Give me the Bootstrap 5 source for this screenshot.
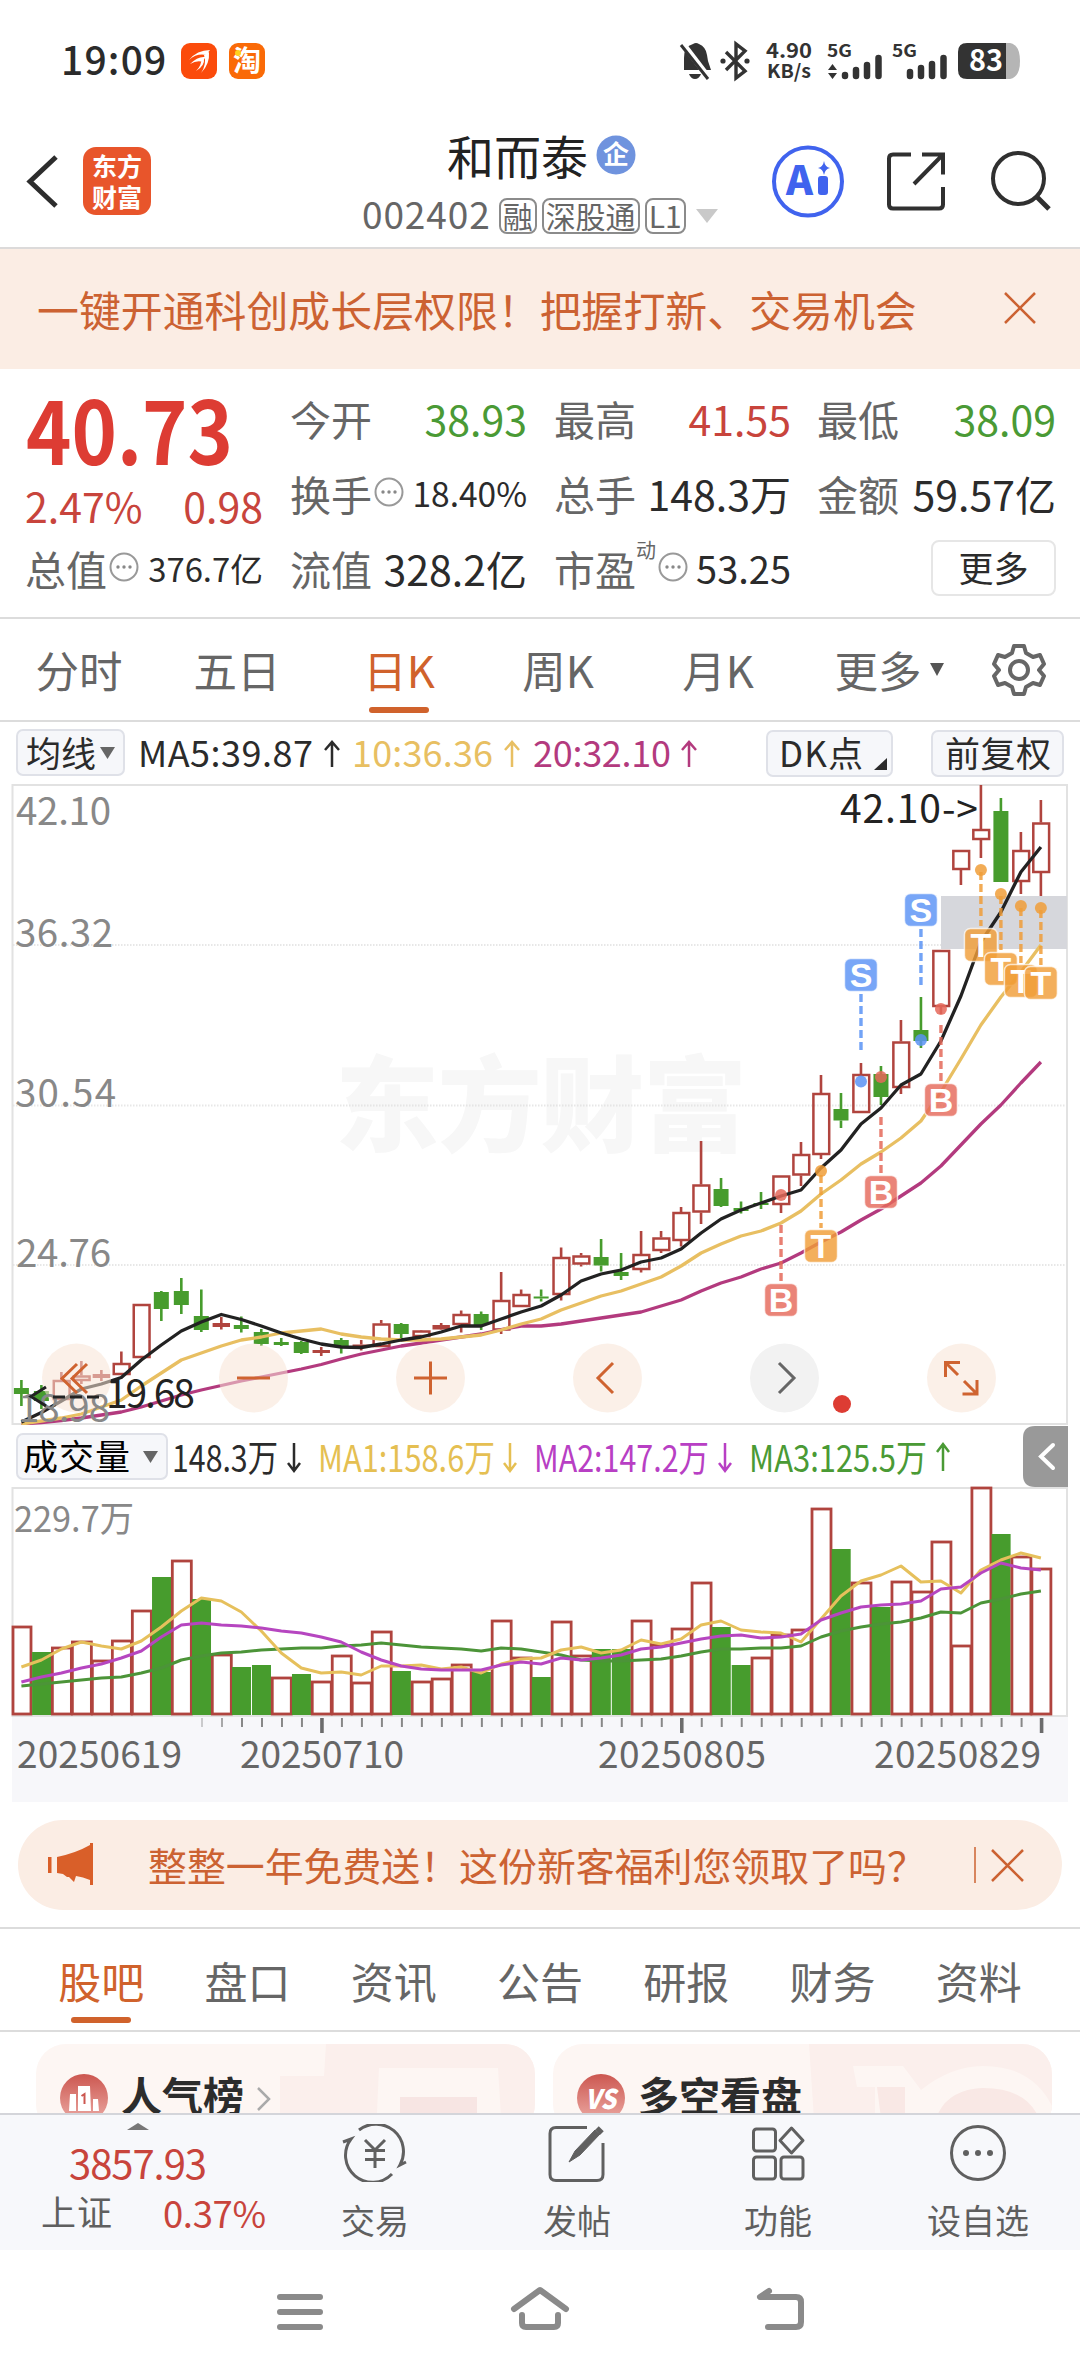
<!DOCTYPE html>
<html lang="zh-CN">
<head>
<meta charset="utf-8">
<meta name="viewport" content="width=device-width, initial-scale=1">
<title>和而泰 002402</title>
<link href="https://cdn.jsdelivr.net/npm/bootstrap@5.3.0/dist/css/bootstrap.min.css" rel="stylesheet">
<style>
body{width:1080px;height:2376px;overflow:hidden;background:#fff;color:#2b2b2b;font-family:"Noto Sans CJK SC",sans-serif;line-height:1;}
svg{display:block;flex:none}
svg text{font-family:"Noto Sans CJK SC",sans-serif}
.status-bar{height:110px;padding:12px 60px 0 61px}
.clock{font-size:39px;font-weight:500;letter-spacing:1.2px;width:120px;padding-bottom:6px}
.head-bar{height:139px;border-bottom:2px solid #dcdada}
.head-mid{width:362px;margin-left:207px}
.stock-name{font-size:47px;color:#222}
.stock-sub{font-size:37px;color:#666;height:37px;gap:5px;margin-top:19px}
.tagbox{font-size:30px;border:2px solid #8b8b8b;border-radius:8px;height:36px;line-height:31px;padding:0 2px;white-space:nowrap}
.notice{height:120px;background:#fbede4;color:#cc6232;font-size:41.9px;padding:0 43px 0 37px}
.notice span{padding-bottom:0}
.quote{height:250px;border-bottom:2px solid #dcdcdc;padding:14px 24px 0 25px}
.qcol{width:237px}
.qcell{height:75px;padding-bottom:5px;font-size:41px;white-space:nowrap}
.qcell .lab{color:#666}
.up{color:#c8443c}.down{color:#4a9a35}
.price{height:98px}
.pct{height:52px;font-size:41px;padding-bottom:3px}
.more-btn{width:125px;height:56px;border:2px solid #e6e6e6;border-radius:8px;font-size:35px;padding-bottom:3px}
.ktabs{height:103px;border-bottom:2px solid #dcdcdc;font-size:43.5px;color:#666}
.tabitem{height:100%;position:relative;white-space:nowrap}
.tabitem.on{color:#d0622c}
.tabitem.on::after{content:"";position:absolute;left:50%;margin-left:-30px;width:60px;height:6px;border-radius:3px;background:#d0622c;bottom:7px}
.promo{height:90px;margin:18px 18px 0;border-radius:45px;background:#fbede4;color:#cc6232;font-size:38.9px;padding:0 38px 0 30px}
.btabs{height:105px;margin-top:17px;border-top:2px solid #dcdcdc;border-bottom:2px solid #dcdcdc;font-size:43px;color:#666;padding:1px 28px 0}
.btabs .tabitem{width:146.3px}
.cards{height:81px;padding:12px 28px 0 36px;gap:18px;overflow:hidden}
.feed{width:499px;height:90px;border-radius:30px;background:#fdf6f3;position:relative;overflow:hidden;padding:30px 0 0 24px;gap:13px}
.feed .bgart{position:absolute;left:0;top:0}
.feed b{font-size:41px;font-weight:700;color:#2c2c2c;position:relative}
.feed .ic{position:relative}
.dock{height:137px;background:#f7f8fb;border-top:2px solid #d4d5da}
.dock .idx{width:274px}
.dock .act{color:#5f5f5f;font-size:34px;padding-top:9px;gap:21px}
.sysnav{height:125px}
</style>
</head>
<body>
<div class="status-bar d-flex align-items-center">
  <div class="clock">19:09</div>
  <svg width="84" height="36" viewBox="0 0 84 36">
    <rect width="36" height="36" rx="9" fill="#fb4b0b"/><path d="M8 17q8-10 21-10l-4 5q-9-2-17 5z M9 21q8-8 15-7l-2 5q-6-2-13 2z M20 30q6-9 3-18l5-3q1 12-8 21z M15 28q6-6 5-12l3-1q1 8-8 13z" fill="#fff"/>
    <rect x="48" width="36" height="36" rx="9" fill="#fa6a07"/><text x="52" y="28" font-size="28" font-weight="700" fill="#fff">淘</text><circle cx="57" cy="10" r="3" fill="#ffd21c"/>
  </svg>
  <svg class="ms-auto" width="342" height="44" viewBox="678 38 342 44" fill="#333">
    <path d="M684 69V57q0-12 9-14 3-2 6 0 7 3 8 11l1 6 3 9z"/><path d="M689 73h12q-2 5-6 5t-6-5z"/><path d="M683 43l26 34" stroke="#fff" stroke-width="6"/><path d="M681 44l27 34" stroke="#333" stroke-width="3"/>
    <path d="M726 51l19 19-9 7V43l9 7-19 19" fill="none" stroke="#333" stroke-width="3.4"/><circle cx="723" cy="60" r="2.6"/><circle cx="747" cy="60" r="2.6"/>
    <text x="766" y="57" font-size="20" font-weight="700" textLength="46" lengthAdjust="spacingAndGlyphs">4.90</text>
    <text x="767" y="77" font-size="19" font-weight="700" textLength="44" lengthAdjust="spacingAndGlyphs">KB/s</text>
    <text x="827" y="56" font-size="17" font-weight="700" textLength="25" lengthAdjust="spacingAndGlyphs">5G</text>
    <text x="892" y="56" font-size="17" font-weight="700" textLength="25" lengthAdjust="spacingAndGlyphs">5G</text>
    <path d="M828 69l4.500-6 4.500 6zM828 72l4.500 6 4.500-6z"/>
    <g stroke="#333" stroke-width="6.500" stroke-linecap="round"><path d="M845 75v-1M856 75v-6M867 75v-11M878.500 75v-18M910 75v-4M921 75v-8M932 75v-12M943.500 75v-18"/></g>
    <path d="M968 42h42q10 2 10 18t-10 18h-42z" fill="#b5b5b5"/><path d="M967 42h39v36h-39q-9 0-9-9V51q0-9 9-9z"/>
    <text x="969" y="70" font-size="29" font-weight="700" fill="#fff" textLength="34" lengthAdjust="spacingAndGlyphs">83</text>
  </svg>
</div>

<div class="head-bar d-flex">
  <svg width="155" height="130" viewBox="0 110 155 130">
    <path d="M56 157L30 181.500 56 206" fill="none" stroke="#2d2d2d" stroke-width="5"/>
    <rect x="83" y="147" width="68" height="68" rx="13" fill="#e8552b"/>
    <text x="92" y="176" font-size="25" font-weight="600" fill="#fff" textLength="50">东方</text><text x="92" y="207" font-size="25" font-weight="600" fill="#fff" textLength="50">财富</text>
  </svg>
  <div class="head-mid d-flex flex-column">
    <div class="d-flex align-items-center" style="padding:21px 0 0 85px">
      <span class="stock-name">和而泰</span>
      <svg class="ms-2" width="40" height="40"><circle cx="20" cy="20" r="19.500" fill="#6f93de"/><text x="7" y="29" font-size="26" font-weight="700" fill="#fff">企</text></svg>
    </div>
    <div class="stock-sub d-flex align-items-center"><span style="letter-spacing:.9px;padding-bottom:5px;margin-right:3px">002402</span><span class="tagbox">融</span><span class="tagbox">深股通</span><span class="tagbox">L1</span>
      <svg class="ms-1" width="24" height="16"><path d="M1 1h22L12 15z" fill="#c9c9c9"/></svg></div>
  </div>
  <svg class="ms-auto" width="314" height="130" viewBox="766 110 314 130">
    <circle cx="808" cy="181.500" r="34" fill="none" stroke="#4063ee" stroke-width="4"/>
    <text x="786" y="195" font-size="40" font-weight="900" fill="#4063ee" textLength="27" lengthAdjust="spacingAndGlyphs">A</text><rect x="818" y="176" width="10" height="19" rx="3" fill="#4063ee"/><path d="M824 161q1 6 6 7-5 1-6 7-1-6-6-7 5-1 6-7z" fill="#4063ee"/>
    <g fill="none" stroke="#303030" stroke-width="4"><path d="M911 154.500h-18q-4 0-4 4v46q0 4 4 4h46q4 0 4-4V187"/><path d="M922 154.500h21v20M943.500 154L914 184"/><circle cx="1018.500" cy="178.500" r="25.500"/><path d="M1036 196l13 13" stroke-width="5"/></g>
  </svg>
</div>

<div class="notice d-flex align-items-center justify-content-between">
  <span>一键开通科创成长层权限！把握打新、交易机会</span>
  <svg width="34" height="34"><path d="M2 1l30 30M32 1L2 31" stroke="#cc6232" stroke-width="2.500"/></svg>
</div>

<div class="quote d-flex">
  <div style="width:238px;margin-right:27px">
    <div class="price"><svg width="238" height="98"><text x="1" y="82" font-size="87" font-weight="700" fill="#dd3c33" textLength="207" lengthAdjust="spacingAndGlyphs">40.73</text></svg></div>
    <div class="pct up d-flex align-items-center justify-content-between"><span>2.47%</span><span>0.98</span></div>
    <div class="qcell d-flex align-items-center"><span class="lab">总值</span><svg class="dots" width="33" height="36"><use href="#dotc"/></svg><span class="ms-auto" style="font-size:32.8px">376.7亿</span></div>
  </div>
  <div class="qcol" style="margin-right:27px">
    <div class="qcell d-flex align-items-center justify-content-between"><span class="lab">今开</span><span class="down">38.93</span></div>
    <div class="qcell d-flex align-items-center"><span class="lab">换手</span><svg width="33" height="36"><use href="#dotc"/></svg><span class="ms-auto" style="font-size:33.500px">18.40%</span></div>
    <div class="qcell d-flex align-items-center justify-content-between"><span class="lab">流值</span><span>328.2亿</span></div>
  </div>
  <div class="qcol" style="margin-right:26px">
    <div class="qcell d-flex align-items-center justify-content-between"><span class="lab">最高</span><span class="up">41.55</span></div>
    <div class="qcell d-flex align-items-center justify-content-between"><span class="lab">总手</span><span>148.3万</span></div>
    <div class="qcell d-flex align-items-center"><span class="lab">市盈</span><span class="lab align-self-start" style="font-size:20px;padding-top:7px">动</span><svg width="33" height="36"><use href="#dotc"/></svg><span class="ms-auto" style="font-size:38px">53.25</span></div>
  </div>
  <div style="width:239px">
    <div class="qcell d-flex align-items-center justify-content-between"><span class="lab">最低</span><span class="down">38.09</span></div>
    <div class="qcell d-flex align-items-center justify-content-between"><span class="lab">金额</span><span>59.57亿</span></div>
    <div class="qcell d-flex align-items-center justify-content-end"><span class="more-btn d-flex align-items-center justify-content-center">更多</span></div>
  </div>
</div>
<svg width="0" height="0" class="position-absolute"><defs><g id="dotc"><circle cx="17" cy="17" r="13.500" fill="none" stroke="#999" stroke-width="2"/><circle cx="11" cy="17" r="1.700" fill="#888"/><circle cx="17" cy="17" r="1.700" fill="#888"/><circle cx="23" cy="17" r="1.700" fill="#888"/></g></defs></svg>

<div class="ktabs d-flex">
  <div class="tabitem d-flex align-items-center justify-content-center" style="width:158px">分时</div>
  <div class="tabitem d-flex align-items-center justify-content-center" style="width:158px">五日</div>
  <div class="tabitem on d-flex align-items-center justify-content-center" style="width:166px">日K</div>
  <div class="tabitem d-flex align-items-center justify-content-center" style="width:152px">周K</div>
  <div class="tabitem d-flex align-items-center justify-content-center" style="width:168px">月K</div>
  <div class="tabitem d-flex align-items-center justify-content-center" style="width:174px">更多<svg class="ms-2" width="14" height="13"><path d="M0 0h14L7 13z" fill="#555"/></svg></div>
  <div class="d-flex align-items-center" style="padding-left:16px"><svg width="54" height="54" viewBox="-27 -27 54 54" fill="none" stroke="#666" stroke-width="4" stroke-linejoin="round"><circle r="9"/><path d="M-5-24H5L7-17 14-13 21-15 25-6 20 0 25 6 21 15 14 13 7 17 5 24H-5L-7 17-14 13-21 15-25 6-20 0-25-6-21-15-14-13-7-17Z"/></svg></div>
</div>

<svg width="1080" height="62" viewBox="0 723 1080 62" font-size="36">
  <g fill="#f6f7fa" stroke="#dfe1e8" stroke-width="2"><rect x="17" y="731" width="107" height="45" rx="6"/><rect x="767" y="732" width="125" height="45" rx="6"/><rect x="932" y="732" width="131" height="45" rx="6"/></g>
  <g fill="#2b2b2b"><text x="26" y="768" font-size="35" textLength="70">均线</text><text x="138" y="768" textLength="175">MA5:39.87</text><text x="779" y="768" font-size="35" textLength="84">DK点</text><text x="945" y="768" font-size="35" textLength="106">前复权</text><path d="M887 759v12h-13z"/></g>
  <path d="M100 748h15l-7.500 12z" fill="#666"/>
  <text x="352" y="768" textLength="141" fill="#e8bf62">10:36.36</text><text x="533" y="768" textLength="138" fill="#b33a7e">20:32.10</text>
  <g fill="none" stroke-width="2.500"><path d="M332 768v-25M325 751l7-8 7 8" stroke="#2b2b2b"/><path d="M512 768v-25M505 751l7-8 7 8" stroke="#e8bf62"/><path d="M689 768v-25M682 751l7-8 7 8" stroke="#b33a7e"/></g>
</svg>

<svg id="kline" width="1080" height="641" viewBox="0 785 1080 641">
  <text x="335" y="1145" font-size="104" font-weight="900" fill="#f7f7f7" textLength="412">东方财富</text>
  <g stroke="#dedede" stroke-width="2" stroke-dasharray="1.500 1.500" opacity=".7"><path d="M13 946H1067M13 1106.500H1067M13 1266H1067"/></g>
  <rect x="12.500" y="786" width="1054.500" height="639" fill="none" stroke="#e2e2e2" stroke-width="2"/>
  <rect x="941" y="897" width="126" height="53" fill="#d6d7dc"/>
  <g id="candles"></g>
  <g id="maLines" fill="none" stroke-width="3.3" stroke-linejoin="round"></g>
  <g id="marks"></g>
  <g fill="#888" font-size="38.500"><text x="16" y="825.500" textLength="95">42.10</text><text x="15" y="947.500" textLength="98">36.32</text><text x="15" y="1107.500" textLength="101">30.54</text><text x="16" y="1267.500" textLength="95">24.76</text></g>
  <text x="840" y="824" font-size="39" fill="#222" textLength="138">42.10-&gt;</text>
  <g fill="#f8e3d6" fill-opacity=".55"><circle cx="76.500" cy="1379" r="34.500"/><circle cx="253.500" cy="1379" r="34.500"/><circle cx="430.500" cy="1379" r="34.500"/><circle cx="607.500" cy="1379" r="34.500"/><circle cx="961.500" cy="1379" r="34.500"/></g>
  <circle cx="784.500" cy="1379" r="34.500" fill="#f2f2f2"/>
  <text x="18" y="1423" font-size="38.500" fill="#888" textLength="92">18.98</text>
  <g stroke="#222" stroke-width="3" fill="none"><path d="M46 1388L31 1397.500 46 1407M53 1398H65M70 1398H82M87 1398H99"/></g>
  <text x="106" y="1409" font-size="39" fill="#222" textLength="89">19.68</text>
  <g fill="none" stroke="#cf6330" stroke-width="3"><path d="M77 1365L62 1379.500 77 1394M87 1365L72 1379.500 87 1394M237 1379H270M414 1379H447M430.500 1362.500V1395.500M613 1364L598 1379 613 1394"/><path d="M958 1376L946.500 1364.500M945.500 1378V1363.500H960M964 1382L976 1394M977 1381V1395H962.500"/></g>
  <path d="M779 1364L794 1379 779 1394" fill="none" stroke="#666" stroke-width="3"/>
  <circle cx="842" cy="1405" r="9" fill="#dd3c33"/>
</svg>

<svg width="1080" height="377" id="volume" viewBox="0 1426 1080 377">
  <rect x="17" y="1435" width="150" height="45" rx="6" fill="#f6f7fa" stroke="#dfe1e8" stroke-width="2"/>
  <text x="23" y="1471" font-size="35" textLength="107">成交量</text><path d="M143 1452h15l-7.500 12z" fill="#666"/>
  <g font-size="37"><text x="172" y="1473" fill="#2b2b2b" textLength="106" lengthAdjust="spacingAndGlyphs">148.3万</text><text x="318" y="1473" fill="#e5bf52" textLength="177" lengthAdjust="spacingAndGlyphs">MA1:158.6万</text><text x="534" y="1473" fill="#b83fc4" textLength="175" lengthAdjust="spacingAndGlyphs">MA2:147.2万</text><text x="749" y="1473" fill="#4a9a35" textLength="178" lengthAdjust="spacingAndGlyphs">MA3:125.5万</text></g>
  <g fill="none" stroke-width="2.500"><path d="M294 1444v27M288 1464l6 8 6-8" stroke="#2b2b2b"/><path d="M510 1444v27M504 1464l6 8 6-8" stroke="#e5bf52"/><path d="M725 1444v27M719 1464l6 8 6-8" stroke="#b83fc4"/><path d="M943 1472v-27M937 1453l6-8 6 8" stroke="#4a9a35"/></g>
  <rect x="12" y="1718" width="1056" height="85" fill="#f7f7fa"/>
  <rect x="12.500" y="1489" width="1054.500" height="228" fill="#fff" stroke="#e2e2e2" stroke-width="2"/>
  <path d="M1068 1427v61h-33q-12 0-12-12v-37q0-12 12-12z" fill="#999"/><path d="M1053 1446L1041 1457.500 1053 1469" fill="none" stroke="#fff" stroke-width="4" stroke-linecap="round"/>
  <text x="14" y="1533" font-size="36" fill="#888" textLength="120" lengthAdjust="spacingAndGlyphs">229.7万</text>
  <g id="bars"></g>
  <g id="volLines" fill="none" stroke-width="3" stroke-linejoin="round"></g>
  <g id="ticks"></g>
  <g fill="#666" font-size="37"><text x="17" y="1768.500" textLength="165">20250619</text><text x="240" y="1768.500" textLength="164">20250710</text><text x="598" y="1768.500" textLength="168">20250805</text><text x="874" y="1768.500" textLength="167">20250829</text></g>
</svg>

<div class="promo d-flex align-items-center">
  <svg width="48" height="44"><path d="M0 14h3.500v16H0zM9 14Q28 10 42 2V0h3v42h-3v-5q-7-3-14-4l-2 6-5-5H19l-4-3-6-1z" fill="#d95f29"/></svg>
  <span style="margin-left:52px;white-space:nowrap;padding-bottom:2px">整整一年免费送！这份新客福利您领取了吗？</span>
  <svg class="ms-auto" width="50" height="38"><path d="M1 1v36" stroke="#cc6232" stroke-width="1.500"/><path d="M18 4l31 31M49 4L18 35" stroke="#cc6232" stroke-width="2.500"/></svg>
</div>

<div class="btabs d-flex">
  <div class="tabitem on d-flex align-items-center justify-content-center">股吧</div>
  <div class="tabitem d-flex align-items-center justify-content-center">盘口</div>
  <div class="tabitem d-flex align-items-center justify-content-center">资讯</div>
  <div class="tabitem d-flex align-items-center justify-content-center">公告</div>
  <div class="tabitem d-flex align-items-center justify-content-center">研报</div>
  <div class="tabitem d-flex align-items-center justify-content-center">财务</div>
  <div class="tabitem d-flex align-items-center justify-content-center">资料</div>
</div>

<div class="cards d-flex">
  <div class="feed d-flex">
    <svg class="bgart" width="499" height="90"><path d="M290 0H499V90H466L462 24H343L340 90H244V32H288z" fill="#fbefec"/><rect x="364" y="53" width="77" height="40" fill="#f7e5e3"/></svg>
    <svg class="ic" width="48" height="48"><defs><linearGradient id="rg" x1="0" y1="0" x2="0" y2="1"><stop offset="0" stop-color="#cc5750"/><stop offset="1" stop-color="#ecaaa4"/></linearGradient></defs><circle cx="24" cy="24" r="24" fill="url(#rg)"/><path d="M9 37l1-17h6v17zM18 37V12h12l1 25zM33 37V25h5l1 12z" fill="#fff"/><path d="M21.500 22l3-2v10" fill="none" stroke="#cc5750" stroke-width="2"/></svg>
    <b>人气榜</b>
    <svg class="ic" width="14" height="24" style="margin-top:13px"><path d="M1 1l11 11L1 23" fill="none" stroke="#aaa" stroke-width="2.500"/></svg>
  </div>
  <div class="feed d-flex">
    <svg class="bgart" width="499" height="90"><path d="M256 0H499V90H262z" fill="#fbefec"/><path d="M300 22h50l18 24q30-24 62-24 49 0 69 40v28h-40q10-40-30-46-40 2-45 46h-62V43h-18z" fill="#fdf6f3"/><path d="M324 43h28v47h-22zM380 90q4-44 50-46 40 0 54 26l-16 20z" fill="#f9e8e5"/></svg>
    <svg class="ic" width="48" height="48"><circle cx="24" cy="24" r="24" fill="url(#rg)"/><text x="8" y="35" font-size="27" font-weight="900" font-style="italic" fill="#fff" textLength="31" lengthAdjust="spacingAndGlyphs">VS</text></svg>
    <b>多空看盘</b>
  </div>
</div>

<div class="dock d-flex">
  <svg class="idx" height="134" viewBox="0 2116 274 134">
    <path d="M127 2131l11-7 11 7z" fill="#777"/>
    <g fill="#c8443c"><text x="69" y="2179.500" font-size="40" textLength="138">3857.93</text><text x="163" y="2228.500" font-size="36.500" textLength="103">0.37%</text></g>
    <text x="41" y="2227" font-size="35" fill="#5f5f5f" textLength="71">上证</text>
  </svg>
  <div class="act d-flex flex-column align-items-center" style="width:202px">
    <svg width="66" height="58" viewBox="342 2125 66 58" fill="none" stroke="#606060" stroke-width="3"><path d="M359 2131A27.500 27.500 0 0 1 400 2166L406 2163M392 2175A27 27 0 0 1 351 2140L343 2143"/><path d="M365 2141l10 10 10-10M375 2151v18M365 2151.500h20M365 2160.500h20"/></svg>交易</div>
  <div class="act d-flex flex-column align-items-center" style="width:202px">
    <svg width="66" height="58" viewBox="0 0 66 58" fill="none" stroke="#606060" stroke-width="3"><path d="M43 3.500H12q-6 0-6 6v41q0 6 6 6h41q6 0 6-6V19"/><path d="M25 38L31 27 51 6 56 10 36 31Z" fill="#606060" stroke-width="1"/><path d="M53 4l5 5" stroke-width="5"/></svg>发帖</div>
  <div class="act d-flex flex-column align-items-center" style="width:200px">
    <svg width="66" height="58" viewBox="0 0 66 58" fill="none" stroke="#606060" stroke-width="3"><rect x="8.500" y="5" width="22" height="22" rx="3"/><rect x="8.500" y="33" width="22" height="22" rx="3"/><rect x="36" y="33" width="22" height="22" rx="3"/><path d="M46.500 4L58 16.500 46.500 29 35 16.500Z" stroke-linejoin="round"/></svg>功能</div>
  <div class="act d-flex flex-column align-items-center" style="width:200px">
    <svg width="66" height="58" viewBox="-33 -29 66 58" fill="#606060"><circle r="26.500" fill="none" stroke="#606060" stroke-width="3"/><circle cx="-12" r="3"/><circle r="3"/><circle cx="12" r="3"/></svg>设自选</div>
</div>

<div class="sysnav">
  <svg width="1080" height="125" viewBox="0 2251 1080 125" fill="none" stroke="#8a8a8a" stroke-width="6" stroke-linecap="round" stroke-linejoin="round">
    <path d="M280 2298H320M280 2313H320M280 2328H320"/><path d="M514 2310L540 2291 566 2310M522 2316v8q0 4 4 4h28q4 0 4-4v-8"/><path d="M769 2292L760 2298H796q5 0 5 5v20q0 5-5 5H768"/>
  </svg>
</div>

<script src="https://cdn.jsdelivr.net/npm/bootstrap@5.3.0/dist/js/bootstrap.bundle.min.js"></script>
<script>
const X = i => 21.4 + 19.99 * i;
const put = (id, html) => document.getElementById(id).innerHTML = html;
const line = (ys, c) => `<polyline stroke="${c}" points="${ys.map((y, i) => X(i).toFixed(1) + ',' + y).join(' ')}"/>`;
const RED = '#b0443e', GREEN = '#479c2d';

// each day: direction, high, body top, body bottom, low
const days = `g 1381 1389 1395 1407|g 1386 1392 1402 1410|r 1373 1381 1401 1401|r 1362 1376.5 1382 1385|r 1371 1375 1379 1382|r 1352.5 1364 1376 1376|r 1305 1305 1359 1359|g 1292 1293 1310 1322|g 1279 1292 1306 1315|g 1290.5 1317 1331 1333|r 1318 1324 1328 1330.5|g 1317.5 1326 1330 1333.5|g 1330 1333 1345 1347|g 1339 1343 1346 1347|g 1342 1343 1354 1355|r 1348 1351 1354 1357|g 1339 1341 1347 1354.5|r 1341 1345.5 1348 1351.5|r 1321 1324.5 1348 1348|g 1324 1325 1335 1339|r 1331 1331.5 1338 1339|r 1324 1326 1330.5 1331|r 1311.5 1315 1326 1333.5|g 1312.5 1315 1326 1331|r 1273 1301 1331.5 1335|r 1290.5 1295 1308 1308|g 1290.5 1297.5 1299.5 1302.5|r 1248.5 1258 1296 1301.5|r 1254 1256.5 1265.5 1267.5|g 1240 1258 1266.5 1272.5|g 1254 1273 1277 1281|r 1232 1255 1271 1273.5|r 1232 1238.5 1252 1254|r 1208 1213 1242 1247.5|r 1142 1185.5 1213.5 1225|g 1179 1190 1207 1208|g 1202.5 1209 1212 1214.5|g 1193 1204 1206 1210|r 1176.5 1176.5 1206 1214|r 1143 1155 1176.5 1187|r 1076 1094 1156 1160|g 1094 1110 1121.5 1129|r 1064 1075 1114 1114|g 1067 1075 1098 1106|r 1021 1042.5 1089 1095|g 998 1031 1042 1049|r 951 951 1008 1015|r 851 851 871 886|r 786 830 841 859|g 799 812 883 883|r 833 851 883 895|r 801 823.5 874 897`.split('|').map(s => s.split(' '));
put('candles', days.map(([c, ...v], i) => {
  const [h, t, b, l] = v.map(Number), x = X(i), g = c === 'g', col = g ? GREEN : RED, ht = Math.max(b - t, 2);
  const wick = `<path d="M${x} ${h}V${t}M${x} ${b}V${l}" stroke="${col}" stroke-width="2.6"/>`;
  return wick + (g || ht < 4.6 ? `<rect x="${x - (g ? 7.5 : 8.7)}" y="${t}" width="${g ? 15 : 17.4}" height="${ht}" fill="${col}"/>`
    : `<rect x="${x - 7.6}" y="${t + 1}" width="15.8" height="${ht - 2}" fill="none" stroke="${col}" stroke-width="2.5"/>`);
}).join(''));

const ma5 = [1423,1413.5,1402,1390,1385,1378.5,1361,1346,1332,1323,1315.5,1320.5,1327,1334,1340,1345,1348,1348.5,1345,1341,1338,1333,1327,1327,1320,1313,1307,1296,1282,1275,1271,1263,1259,1250,1234,1220,1211,1204,1197,1191,1169,1151,1125,1109,1086,1075,1042,997,943,913,873,848];
const ma10 = [1425,1422,1419,1415,1408,1401,1387,1374,1361,1354,1347,1341,1338,1334,1332,1330,1335,1338,1340,1341,1341,1340,1338,1336,1331,1325,1320,1311,1304,1297,1292,1285,1278,1267,1254,1245,1237,1232,1224,1212,1195,1181,1165,1153,1139,1122,1093,1060,1026,998,973,946];
const ma20 = [1425,1423.5,1421.5,1419,1416,1413,1408,1402,1396,1391,1386.5,1382,1378,1374,1370,1365.5,1360,1355,1351,1347,1344,1341,1338,1335,1330.5,1327,1327,1325,1322,1319,1316,1313,1307,1301,1292,1284,1278,1270,1264,1254,1243,1233,1221,1210,1197,1184,1167,1146,1125,1106,1084,1063];
put('maLines', line(ma20, '#b33a7e') + line(ma10, '#e8bf62') + line(ma5, '#222'));

// trade markers: letter, day, badge centre, guide from, guide to, dot
const kind = {S: '#5a93f5', B: '#e5695a', T: '#f09d38'};
const marks = [['S',42,976,995,1052,1082.5],['S',45,911,930,986,1041],['B',46,1101,1026,1083,1010],['B',43,1193,1118,1174,1078],['B',38,1301,1226,1282,1196],['T',40,1247,1176,1229,1172],['T',48,946,873,927,871],['T',49,970,897,951,895],['T',50,982,909,964,907],['T',51,984,911,966,909]];
put('marks', marks.map(([k, i, y, a, b, d]) => {
  const x = X(i), c = kind[k];
  return `<g><path d="M${x} ${a}V${b}" stroke="${c}" stroke-width="3.4" stroke-dasharray="8 4" opacity=".85"/><circle cx="${x}" cy="${d}" r="6" fill="${c}" opacity=".85"/>
  <rect x="${x - 16.5}" y="${y - 16.5}" width="33" height="33" rx="6" fill="${c}" fill-opacity=".82" stroke="#fff" stroke-opacity=".7" stroke-width="1.5"/>
  <text x="${x}" y="${y + 12}" font-size="34" font-weight="700" fill="#fff" text-anchor="middle" style="font-family:'Liberation Sans',sans-serif">${k}</text></g>`;
}).join(''));

const vol = 'r1628 g1653 r1649 r1643 r1662 r1642 r1612 g1578 r1562 g1600 r1656 g1668 g1666 r1679 g1675 r1683 r1657 r1684 r1633 g1672 r1683 r1680 r1666 g1673 r1622 r1659 g1678 r1623 r1657 g1650 g1650 r1622 r1646 r1630 r1584 g1628 g1666 r1659 r1636 r1631 r1510 g1550 r1584 g1608 r1583 r1593 r1543 r1647 r1489 g1535 r1558 r1570'.split(' ');
put('bars', vol.map((s, i) => {
  const g = s[0] === 'g', y = +s.slice(1), x = X(i);
  return g ? `<rect x="${x - 9.3}" y="${y}" width="19" height="${1716 - y}" fill="${GREEN}"/>`
    : `<rect x="${Math.max(x - 9, 13)}" y="${y}" width="${i ? 19 : 18}" height="${1715 - y}" fill="#fff" stroke="${RED}" stroke-width="2.8"/>`;
}).join(''));
const v1 = [1668,1661,1650,1643,1647,1650,1642,1628,1612,1599,1602,1613,1632,1654,1669,1674,1673,1676,1667,1667,1666,1670,1668,1674,1665,1660,1659,1651,1648,1654,1651,1641,1645,1640,1626,1622,1631,1633,1634,1643,1620,1597,1582,1576,1567,1583,1582,1594,1571,1561,1554,1559];
const v2 = [1683,1678,1674,1669,1665,1659,1652,1638,1626,1624,1626,1627,1629,1632,1634,1638,1643,1653,1661,1667,1670,1671,1671,1671,1666,1663,1665,1659,1661,1659,1656,1650,1648,1644,1640,1637,1636,1639,1638,1635,1621,1614,1608,1606,1605,1602,1590,1588,1574,1564,1569,1571];
const v3 = [1687,1685,1683,1681,1679,1678,1674,1669,1661,1657,1654,1653,1651,1650,1649,1649,1647,1646,1644,1646,1648,1649,1650,1652,1649,1650,1653,1656,1661,1662,1662,1661,1660,1657,1653,1650,1650,1649,1649,1647,1638,1632,1628,1625,1623,1619,1613,1614,1604,1600,1595,1592];
put('volLines', line(v3, '#4c9438') + line(v1, '#e6c05c') + line(v2, '#b646c0'));
put('ticks', Array.from({length: 43}, (_, k) => k + 9).map(i => {
  const big = [15, 33, 51].includes(i);
  return `<path d="M${X(i) + .7} 1719V${big ? 1734 : 1728}" stroke="${big ? '#6c6c6c' : '#888'}" stroke-width="${big ? 3.6 : 2}" opacity="${i === 9 ? .4 : i === 10 ? .7 : 1}"/>`;
}).join(''));
</script>
</body>
</html>
